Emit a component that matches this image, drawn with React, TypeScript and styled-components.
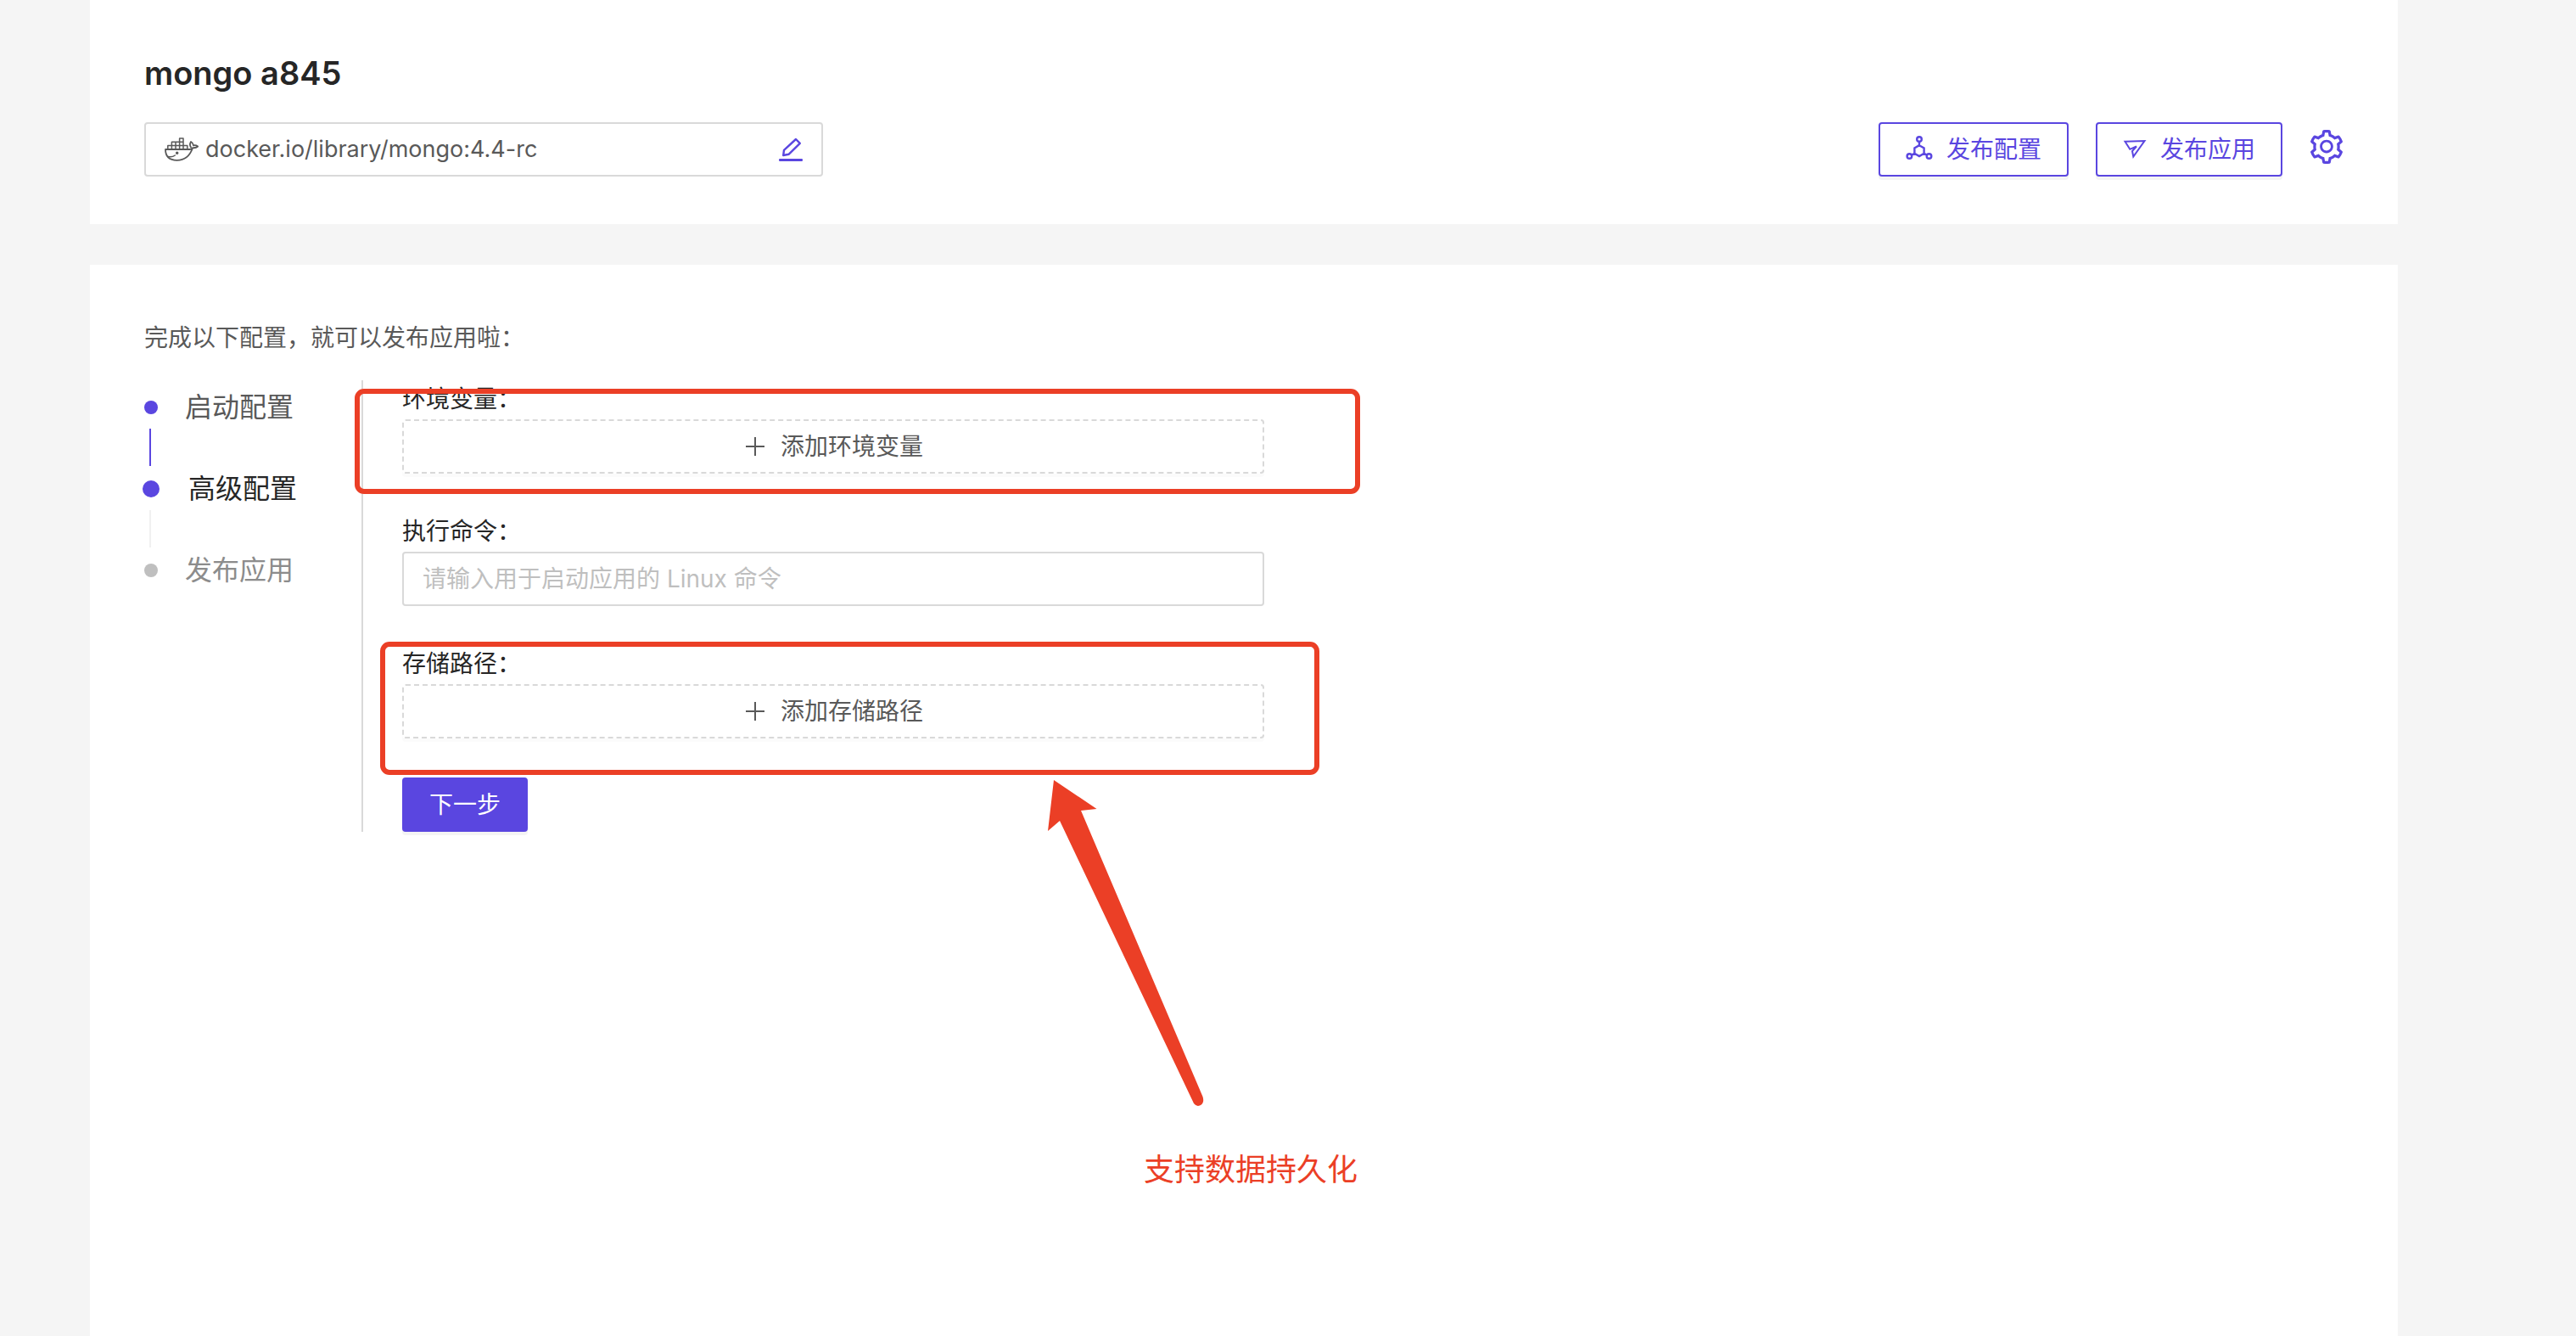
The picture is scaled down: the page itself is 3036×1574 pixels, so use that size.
import React from "react";
import styled, { createGlobalStyle } from "styled-components";
import { AiOutlineSetting } from "react-icons/ai";

const accent = "#5a46e0";
const mark = "#eb3f26";
const line = "#d9d9d9";

const GlobalStyle = createGlobalStyle`
  *, *::before, *::after { box-sizing: border-box; }
  body {
    margin: 0;
    background: #f5f5f5;
    color: #595959;
    font: 28px/44px Inter, "Noto Sans CJK SC", sans-serif;
  }
  button, input { font: inherit; margin: 0; }
  svg { display: block; flex: none; }
`;

const Page = styled.main`
  display: flex;
  flex-direction: column;
  gap: 48px;
  min-height: 100vh;
  padding: 0 210px 0 106px;
`;

const Card = styled.section<{ $grow?: boolean }>`
  flex: ${(p) => (p.$grow ? "1" : "none")};
  padding: ${(p) => (p.$grow ? "64px" : "56px 64px")};
  background: #fff;
`;

const Title = styled.h1`
  margin: 0 0 28px;
  color: #262626;
  font-size: 38px;
  line-height: 60px;
  font-weight: 600;
`;

const HeaderRow = styled.div`
  display: flex;
  align-items: center;
  justify-content: space-between;
`;

const ImageBox = styled.div`
  display: flex;
  align-items: center;
  gap: 8px;
  width: 800px;
  height: 64px;
  padding: 0 22px;
  border: 2px solid ${line};
  border-radius: 4px;
`;

const ImageName = styled.span`
  flex: 1;
  font-size: 27px;
`;

const IconButton = styled.button`
  padding: 0;
  border: 0;
  background: none;
  color: ${accent};
  cursor: pointer;
`;

const SettingsButton = styled(IconButton)`
  padding-bottom: 6px;
`;

const Actions = styled.div`
  display: flex;
  align-items: center;
  gap: 32px;
`;

const Button = styled.button<{ $kind: "outline" | "dashed" | "primary" }>`
  display: flex;
  align-items: center;
  justify-content: center;
  gap: 16px;
  height: 64px;
  padding: 0 30px;
  border: 2px ${(p) => (p.$kind === "dashed" ? "dashed" : "solid")} ${(p) => (p.$kind === "dashed" ? line : accent)};
  border-radius: 4px;
  background: ${(p) => (p.$kind === "primary" ? accent : "#fff")};
  color: ${(p) => ({ outline: accent, dashed: "#595959", primary: "#fff" })[p.$kind]};
  box-shadow: 0 4px 0 rgba(0, 0, 0, ${(p) => (p.$kind === "dashed" ? 0.016 : 0.045)});
  cursor: pointer;
`;

const Intro = styled.p`
  margin: 0 0 28px;
`;

const Workspace = styled.div`
  position: relative;
  display: flex;
`;

const Steps = styled.ol`
  width: 256px;
  margin: 0;
  padding: 8px 0 0;
  list-style: none;
`;

const Step = styled.li<{ $state: "done" | "current" | "todo" }>`
  position: relative;
  display: grid;
  grid-template-columns: 16px 1fr;
  align-items: center;
  column-gap: ${(p) => (p.$state === "current" ? 36 : 32)}px;
  height: 48px;
  margin-bottom: 48px;
  font-size: 32px;
  line-height: 48px;
  color: ${(p) => ({ done: "#595959", current: "#262626", todo: "#8c8c8c" })[p.$state]};

  &:not(:last-child)::after {
    content: "";
    position: absolute;
    left: 6px;
    top: 49px;
    width: 2px;
    height: 44px;
    background: ${(p) => (p.$state === "done" ? accent : "#f0f0f0")};
  }
`;

const Dot = styled.span<{ $state: "done" | "current" | "todo" }>`
  justify-self: center;
  width: ${(p) => (p.$state === "current" ? 20 : 16)}px;
  height: ${(p) => (p.$state === "current" ? 20 : 16)}px;
  border-radius: 50%;
  background: ${(p) => (p.$state === "todo" ? "#bfbfbf" : accent)};
`;

const Form = styled.form`
  display: flex;
  flex-direction: column;
  align-items: flex-start;
  gap: 46px;
  width: 1064px;
  padding-left: 46px;
  border-left: 2px solid ${line};
`;

const Field = styled.div`
  display: grid;
  gap: 2px;
  width: 100%;
`;

const Label = styled.label`
  color: #262626;
`;

const TextInput = styled.input`
  width: 100%;
  height: 64px;
  padding: 0 22px;
  border: 2px solid ${line};
  border-radius: 4px;
  background: #fff;
  color: #262626;
  outline: none;

  &::placeholder { color: #bfbfbf; opacity: 1; }
`;

const Outline = styled.div<{ $x: number; $y: number; $w: number; $h: number }>`
  position: absolute;
  left: ${(p) => p.$x}px;
  top: ${(p) => p.$y}px;
  width: ${(p) => p.$w}px;
  height: ${(p) => p.$h}px;
  border: 6px solid ${mark};
  border-radius: 11px;
  pointer-events: none;
`;

const Arrow = styled.svg`
  position: absolute;
  left: 1064px;
  top: 470px;
  fill: ${mark};
`;

const Note = styled.p`
  position: absolute;
  left: 1178px;
  top: 902px;
  margin: 0;
  color: ${mark};
  font-size: 36px;
  line-height: 56px;
  white-space: nowrap;
`;

const DockerIcon = () => (
  <svg width="40" height="28" viewBox="0 0 40 28" fill="none" stroke="currentColor" strokeWidth="1.5" strokeLinejoin="round" strokeLinecap="round" aria-hidden="true">
    <path d="M1 14 H29.500 C31.500 14 32.500 13.200 33 12.200 C35.500 12.400 37.800 11.900 39.200 10.500 C37.500 9.300 35.500 9 34 9.400 C33.800 7.500 32.500 5.800 31 5 C29.700 7 29.600 9.500 31 11.500 M33 12.500 C30 21 24 26.800 14.500 26.800 C5.500 26.800 1 22 1 14" strokeWidth="1.800" />
    <path d="M3.800 14 V9.500 H26.800 V14 M8.400 14 V5.200 H22 M13 14 V5.200 M17.600 14 V1 H22 V14" />
    <path d="M4.500 22.500 C7.500 23 10.500 22.300 12.300 21" />
    <circle cx="14.700" cy="18.300" r="1" fill="currentColor" />
  </svg>
);

const EditIcon = () => (
  <svg width="28" height="28" viewBox="0 0 28 28" fill="none" stroke="currentColor" strokeWidth="2.400" strokeLinejoin="round" aria-hidden="true">
    <path d="M20 2 L24.800 6.800 L11.500 19.800 L5.200 21 L6 14.800 Z" />
    <path d="M1.200 26.500 H26.800" strokeWidth="2.800" strokeLinecap="round" />
  </svg>
);

const DeployIcon = () => (
  <svg width="32" height="32" viewBox="0 0 32 32" fill="none" stroke="currentColor" strokeWidth="2.400" aria-hidden="true">
    <path d="M16 11.200 L21.600 14.400 V20.800 L16 24 L10.400 20.800 V14.400 Z M16 7 V11.200 M10.400 20.800 L7 22.600 M21.600 20.800 L25 22.600" />
    <circle cx="16" cy="4" r="2.800" />
    <circle cx="4.400" cy="24" r="2.800" />
    <circle cx="27.500" cy="24" r="2.800" />
  </svg>
);

const SendIcon = () => (
  <svg width="28" height="28" viewBox="0 0 28 28" fill="none" stroke="currentColor" strokeWidth="2" aria-hidden="true">
    <path d="M2.500 4.700 L25.500 4 L12.300 22.500 L11 16 L16 10.500 L8.300 13.800 Z" />
  </svg>
);

const PlusIcon = () => (
  <svg width="28" height="28" viewBox="0 0 28 28" fill="none" stroke="currentColor" strokeWidth="2" aria-hidden="true">
    <path d="M3 14 H25 M14 3 V25" />
  </svg>
);

const steps = [
  { name: "启动配置", state: "done" },
  { name: "高级配置", state: "current" },
  { name: "发布应用", state: "todo" },
] as const;

export default function App() {
  return (
    <>
      <GlobalStyle />
      <Page>
        <Card>
          <Title>mongo a845</Title>
          <HeaderRow>
            <ImageBox>
              <DockerIcon />
              <ImageName>docker.io/library/mongo:4.4-rc</ImageName>
              <IconButton type="button" aria-label="编辑"><EditIcon /></IconButton>
            </ImageBox>
            <Actions>
              <Button type="button" $kind="outline"><DeployIcon />发布配置</Button>
              <Button type="button" $kind="outline"><SendIcon />发布应用</Button>
              <SettingsButton type="button" aria-label="设置">
                <AiOutlineSetting size={40} viewBox="64 64 896 896" />
              </SettingsButton>
            </Actions>
          </HeaderRow>
        </Card>
        <Card $grow>
          <Intro>完成以下配置，就可以发布应用啦：</Intro>
          <Workspace>
            <Steps>
              {steps.map((s) => (
                <Step key={s.name} $state={s.state}>
                  <Dot $state={s.state} />
                  {s.name}
                </Step>
              ))}
            </Steps>
            <Form onSubmit={(e) => e.preventDefault()}>
              <Field>
                <Label htmlFor="env">环境变量：</Label>
                <Button id="env" type="button" $kind="dashed"><PlusIcon />添加环境变量</Button>
              </Field>
              <Field>
                <Label htmlFor="command">执行命令：</Label>
                <TextInput id="command" placeholder="请输入用于启动应用的 Linux 命令" />
              </Field>
              <Field>
                <Label htmlFor="storage">存储路径：</Label>
                <Button id="storage" type="button" $kind="dashed"><PlusIcon />添加存储路径</Button>
              </Field>
              <Button type="submit" $kind="primary">下一步</Button>
            </Form>
            <Outline $x={248} $y={10} $w={1185} $h={124} />
            <Outline $x={278} $y={308} $w={1107} $h={157} />
            <Arrow width="186" height="388" viewBox="0 0 186 388" aria-hidden="true">
              <path d="M8 1 L58.500 35 L40 37 L183.500 374 Q186 382 180 384.500 Q176 386 173 382 L15 49 L1 61 Z" />
            </Arrow>
            <Note>支持数据持久化</Note>
          </Workspace>
        </Card>
      </Page>
    </>
  );
}
